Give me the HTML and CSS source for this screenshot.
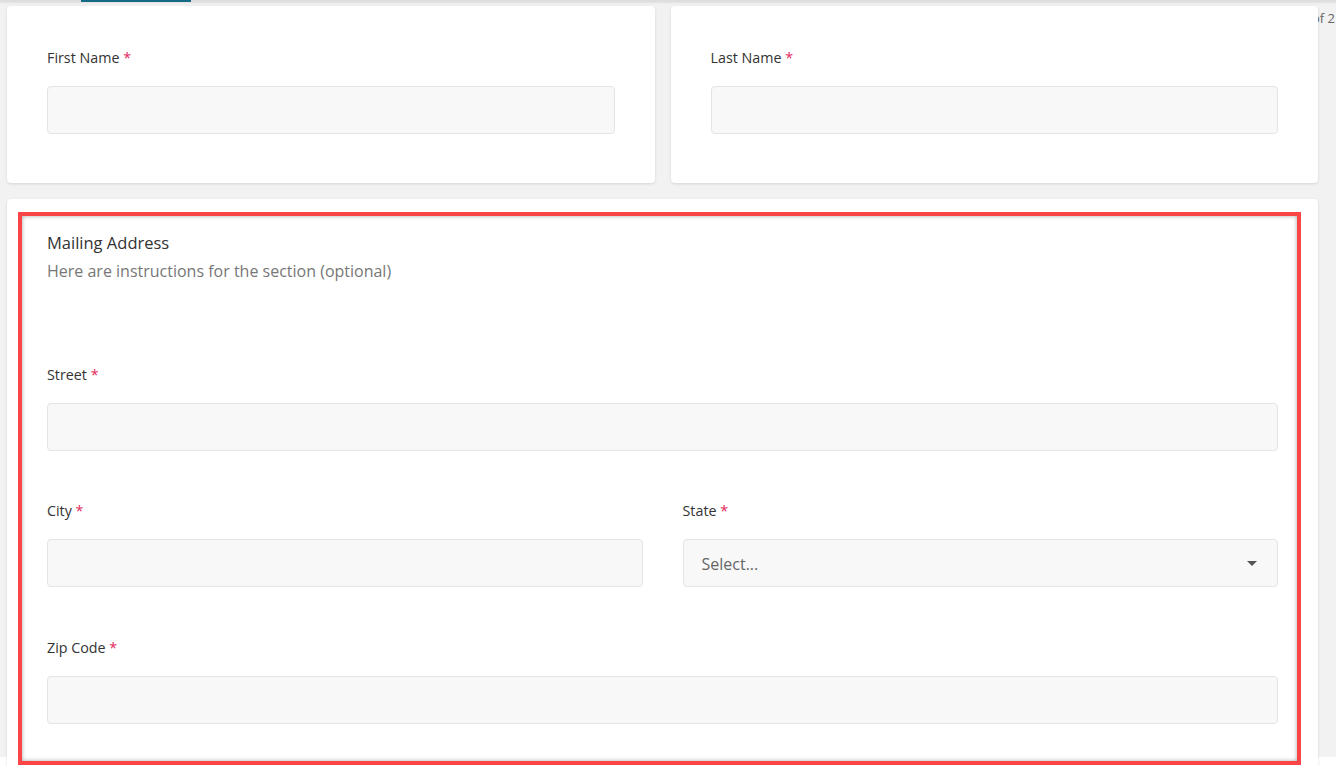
FILE: index.html
```html
<!DOCTYPE html>
<html lang="en">
<head>
<meta charset="utf-8">
<title>Form</title>
<link rel="stylesheet" href="styles.css">
</head>
<body>
<div class="viewport">
  <div class="topbar"><div class="tab"></div></div>
  <span class="pager">Page 1 of 2</span>
  <div class="content">
    <div class="row">
      <div class="card card-small">
        <label class="label">First Name <span class="req">*</span></label>
        <div class="input"></div>
      </div>
      <div class="card card-small">
        <label class="label">Last Name <span class="req">*</span></label>
        <div class="input"></div>
      </div>
    </div>
    <div class="card card-section">
      <div class="highlight"></div>
      <h2 class="section-title">Mailing Address</h2>
      <p class="section-help">Here are instructions for the section (optional)</p>
      <div class="fields">
        <div class="field">
          <label class="label">Street <span class="req">*</span></label>
          <div class="input"></div>
        </div>
        <div class="field-row">
          <div class="field">
            <label class="label">City <span class="req">*</span></label>
            <div class="input"></div>
          </div>
          <div class="field">
            <label class="label">State <span class="req">*</span></label>
            <div class="input select">
              <span class="placeholder">Select...</span>
              <span class="caret"></span>
            </div>
          </div>
        </div>
        <div class="field field-last">
          <label class="label">Zip Code <span class="req">*</span></label>
          <div class="input"></div>
        </div>
      </div>
    </div>
  </div>
</div>
</body>
</html>
```

FILE: styles.css
```css
* { box-sizing: border-box; }
html, body {
  margin: 0;
  padding: 0;
  background: #ffffff;
  font-family: "Open Sans", "Noto Sans", "Liberation Sans", sans-serif;
  color: #333333;
}
body {
  height: 766px;
  overflow: hidden;
}
.viewport {
  position: relative;
  height: 757px;
  background: #f2f2f2;
}
.topbar {
  height: 2px;
  background: #dedede;
  box-shadow: 0 1px 2px rgba(0,0,0,0.08);
}
.tab {
  margin-left: 81px;
  width: 110px;
  height: 2px;
  background: #136a82;
}
.pager {
  position: absolute;
  right: 1px;
  top: 9px;
  font-size: 13px;
  color: #666666;
  white-space: nowrap;
}
.content {
  position: relative;
  z-index: 1;
  padding: 4px 18px 0 7px;
}
.row {
  display: grid;
  grid-template-columns: 1fr 1fr;
  column-gap: 16px;
  margin-bottom: 16px;
}
.card {
  background: #ffffff;
  border-radius: 4px;
  box-shadow: 0 1px 3px rgba(0,0,0,0.12);
}
.card-small {
  padding: 42px 40px 49px;
}
.label {
  display: block;
  font-size: 14.3px;
  line-height: 20px;
  color: #333333;
  margin-bottom: 18px;
}
.req { color: #e4285c; }
.input {
  height: 48px;
  background: #f8f8f8;
  border: 1px solid #e4e4e4;
  border-radius: 4px;
}
.card-section {
  position: relative;
  padding: 33px 40px 40px;
  min-height: 600px;
}
.highlight {
  position: absolute;
  left: 11px;
  top: 13px;
  width: 1283px;
  height: 553px;
  border: 4px solid #f94545;
  box-shadow: inset 0 0 4px rgba(0,0,0,0.35);
  pointer-events: none;
}
.section-title {
  margin: 0;
  font-size: 16.5px;
  line-height: 22px;
  font-weight: 400;
  color: #333333;
}
.section-help {
  margin: 6px 0 0;
  font-size: 16px;
  line-height: 22px;
  color: #777777;
}
.fields {
  margin-top: 83px;
  display: flex;
  flex-direction: column;
  row-gap: 50px;
}
.field-last {
  margin-top: 1px;
}
.field-row {
  display: grid;
  grid-template-columns: 1fr 1fr;
  column-gap: 40px;
}
.select {
  display: flex;
  align-items: center;
  justify-content: space-between;
  padding: 1px 20px 0 18px;
}
.placeholder {
  font-size: 16px;
  color: #666666;
}
.caret {
  width: 0;
  height: 0;
  border-left: 5px solid transparent;
  border-right: 5px solid transparent;
  border-top: 5px solid #555555;
}
```
